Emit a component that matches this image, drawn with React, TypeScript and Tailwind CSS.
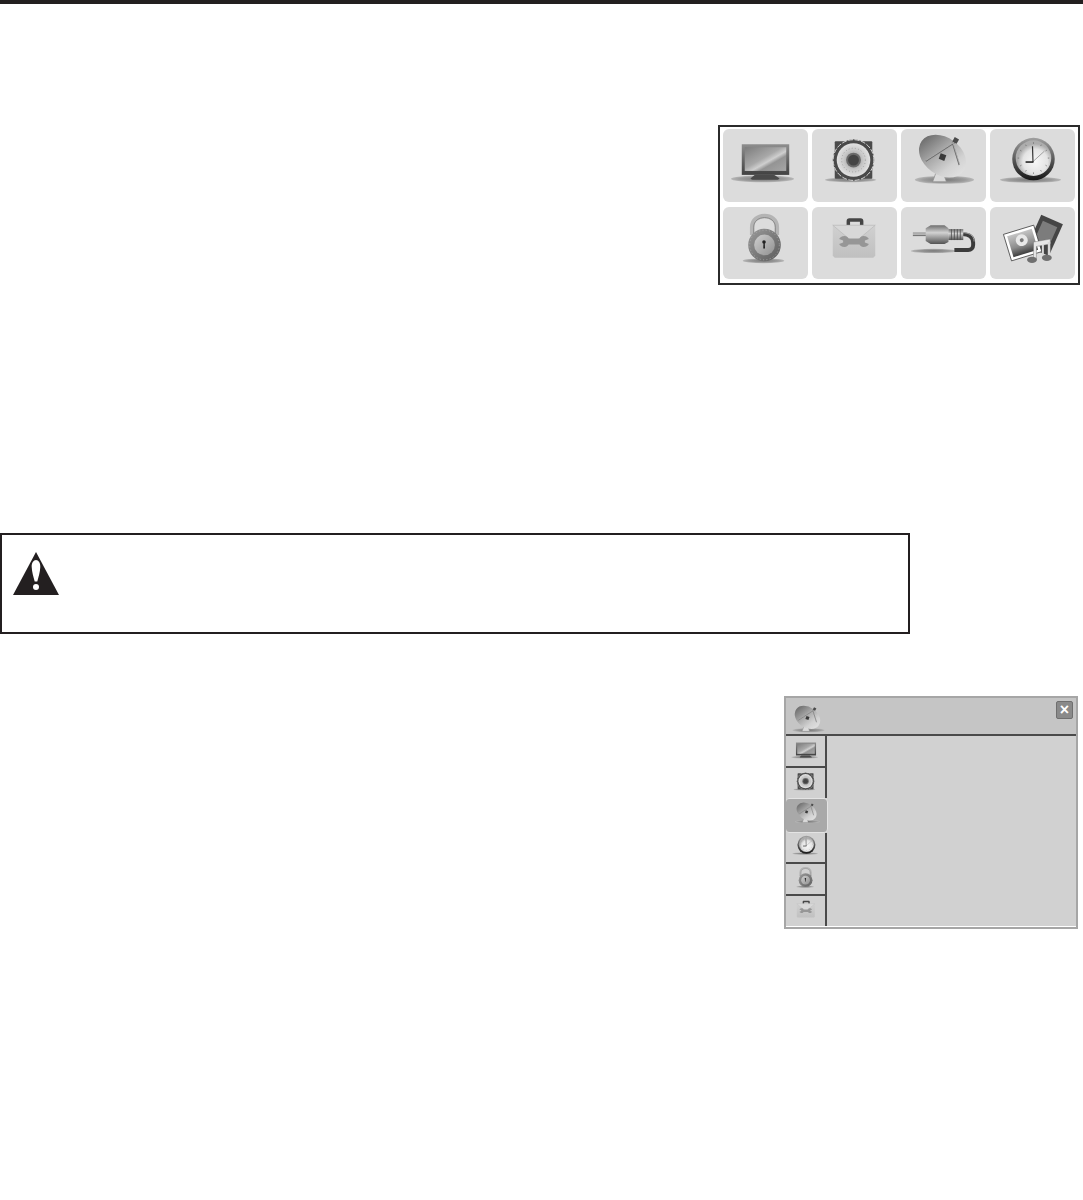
const Shadow = ({ cx, cy, rx, ry = 3.4 }: { cx: number; cy: number; rx: number; ry?: number }) => (
  <ellipse cx={cx} cy={cy} rx={rx} ry={ry} fill="url(#shadow)" />
);

// shared gradients, referenced by id from every icon
function IconDefs() {
  return (
    <svg className="block h-0 w-0" aria-hidden>
      <defs>
        <radialGradient id="shadow">
          <stop offset="0" stopColor="#777" />
          <stop offset="0.7" stopColor="#9c9c9c" />
          <stop offset="1" stopColor="#b8b8b8" />
        </radialGradient>
        <linearGradient id="screen" x1="0" y1="0" x2="1" y2="1">
          <stop offset="0" stopColor="#7c7c7c" />
          <stop offset="0.45" stopColor="#a8a8a8" />
          <stop offset="0.58" stopColor="#cfcfcf" />
          <stop offset="0.68" stopColor="#949494" />
          <stop offset="1" stopColor="#a6a6a6" />
        </linearGradient>
        <linearGradient id="bezel" x1="0" y1="0" x2="0" y2="1">
          <stop offset="0" stopColor="#8e8e8e" />
          <stop offset="1" stopColor="#414141" />
        </linearGradient>
        <radialGradient id="cone">
          <stop offset="0" stopColor="#8c8c8c" />
          <stop offset="0.6" stopColor="#c9c9c9" />
          <stop offset="1" stopColor="#e2e2e2" />
        </radialGradient>
        <linearGradient id="dish" gradientUnits="userSpaceOnUse" x1="16" y1="18" x2="68" y2="32">
          <stop offset="0" stopColor="#6a6a6a" />
          <stop offset="0.4" stopColor="#a6a6a6" />
          <stop offset="0.75" stopColor="#d2d2d2" />
          <stop offset="1" stopColor="#e0e0e0" />
        </linearGradient>
        <linearGradient id="clockRim" x1="0" y1="0" x2="0" y2="1">
          <stop offset="0" stopColor="#a0a0a0" />
          <stop offset="1" stopColor="#161616" />
        </linearGradient>
        <radialGradient id="clockFace" cx="0.55" cy="0.6">
          <stop offset="0" stopColor="#f8f8f8" />
          <stop offset="0.7" stopColor="#e4e4e4" />
          <stop offset="1" stopColor="#adadad" />
        </radialGradient>
        <linearGradient id="lockBody" x1="0" y1="0" x2="1" y2="1">
          <stop offset="0" stopColor="#9a9a9a" />
          <stop offset="1" stopColor="#5c5c5c" />
        </linearGradient>
        <linearGradient id="lockFace" x1="0" y1="0" x2="1" y2="1">
          <stop offset="0" stopColor="#cfcfcf" />
          <stop offset="1" stopColor="#909090" />
        </linearGradient>
        <linearGradient id="toolbox" x1="0" y1="0" x2="0" y2="1">
          <stop offset="0" stopColor="#d0d0d0" />
          <stop offset="1" stopColor="#c0c0c0" />
        </linearGradient>
        <linearGradient id="plug" x1="0" y1="0" x2="0" y2="1">
          <stop offset="0" stopColor="#6e6e6e" />
          <stop offset="0.4" stopColor="#d2d2d2" />
          <stop offset="1" stopColor="#525252" />
        </linearGradient>
        <linearGradient id="photo" x1="0" y1="0" x2="0" y2="1">
          <stop offset="0" stopColor="#c4c4c4" />
          <stop offset="0.6" stopColor="#8c8c8c" />
          <stop offset="1" stopColor="#3e3e3e" />
        </linearGradient>
      </defs>
    </svg>
  );
}

const Tv = () => (
  <>
    <Shadow cx={40} cy={50} rx={32} />
    <path d="M32 46h20l5 3.500c0 1-1 1.500-3 1.500H31c-2 0-3-.5-3-1.500z" fill="#4a4a4a" />
    <rect x="19" y="15" width="48" height="31" fill="url(#bezel)" />
    <rect x="22" y="18" width="42" height="24" fill="url(#screen)" />
  </>
);

const Speaker = () => (
  <>
    <Shadow cx={39} cy={51} rx={26} ry={2.4} />
    <rect x="23" y="12" width="38" height="38" rx="1" fill="#4b4b4b" />
    <circle cx="42" cy="31" r="21" fill="#4a4a4a" />
    <circle cx="42" cy="31" r="20.600" fill="none" stroke="#e4e4e4" strokeDasharray="5 1.500" strokeWidth="0.9" />
    <circle cx="42" cy="31" r="17" fill="url(#cone)" />
    <circle cx="42" cy="31" r="12" fill="none" stroke="#8a8a8a" strokeDasharray="0.8 2.400" strokeWidth="0.8" />
    <circle cx="42" cy="31" r="7.500" fill="#6a6a6a" />
    <circle cx="42" cy="31" r="5.500" fill="#444" />
  </>
);

const Dish = () => (
  <>
    <Shadow cx={44} cy={51} rx={30} ry={4} />
    <path d="M36 42l-4 11h14l-4-11z" fill="#dadada" stroke="#8a8a8a" strokeWidth="0.7" />
    <ellipse cx="42" cy="27" rx="26" ry="19" transform="rotate(36 42 27)" fill="url(#dish)" />
    <path d="M25 32L56 12M52 13l7 23" fill="none" stroke="#6a6a6a" strokeWidth="1.500" />
    <path d="M25 31.500L56 11.500M52.500 13l7 23" fill="none" stroke="#e0e0e0" strokeWidth="0.5" />
    <rect x="53" y="9" width="5" height="5" fill="#4a4a4a" transform="rotate(30 56 11)" />
    <rect x="39" y="25" width="6" height="6" fill="#3a3a3a" transform="rotate(20 42 28)" />
  </>
);

const Clock = () => (
  <>
    <Shadow cx={41} cy={51} rx={31} ry={3} />
    <circle cx="44" cy="30" r="21.500" fill="url(#clockRim)" />
    <circle cx="44" cy="29" r="18" fill="url(#clockFace)" />
    <path d="M44 13v1.500M44 43.500V45M28 29h1.500M58.500 29H60M36 15.500l.8 1.300M52 15.500l-.8 1.300M30.500 21l1.300.8M57.500 21l-1.300.8M30.500 37l1.300-.8M57.500 37l-1.300-.8M36 42.500l.8-1.300M52 42.500l-.8-1.300" stroke="#666" strokeWidth="0.7" />
    <path d="M43.500 33L43 17" stroke="#333" strokeWidth="1.200" />
    <path d="M43 33L55 22" stroke="#808080" strokeWidth="0.7" />
    <path d="M36 33h8" stroke="#222" strokeWidth="1.600" />
  </>
);

const Lock = () => (
  <>
    <Shadow cx={41} cy={54} rx={21} ry={2.400} />
    <path d="M29.500 28V20c0-15 25-15 25 0v8" fill="none" stroke="#b4b4b4" strokeWidth="4.500" />
    <path d="M31 28V20c0-13 22-13 22 0v8" fill="none" stroke="#7a7a7a" strokeWidth="0.7" />
    <circle cx="42" cy="38" r="16.500" fill="url(#lockBody)" />
    <circle cx="42" cy="38" r="15" fill="none" stroke="#b0b0b0" strokeDasharray="1.200 2.200" strokeWidth="0.7" />
    <circle cx="42" cy="38" r="10.500" fill="url(#lockFace)" />
    <circle cx="41.500" cy="35" r="1.800" fill="#222" />
    <path d="M41 35h1.200l.3 6.500h-1.800z" fill="#222" />
  </>
);

const Toolbox = () => (
  <>
    <path d="M35 18v-4c0-2 1-3 3-3h11c2 0 3 1 3 3v4h-3.500v-3.500h-10V18z" fill="#454545" />
    <path d="M21 18h43v31l-2 2H23l-2-2z" fill="url(#toolbox)" />
    <path d="M21 18l21.500 18L64 18z" fill="#d8d8d8" stroke="#b4b4b4" strokeWidth="0.6" />
    <path d="M33 29c-3 0-5 1.500-5.500 3l4 1.500v2l-4 1.500c.5 1.500 2.500 3 5.500 3 2 0 3-1 4-2.500h11c1 1.500 2 2.500 4 2.500 3 0 5-1.500 5.500-3l-4-1.500v-2l4-1.500c-.5-1.500-2.500-3-5.500-3-2 0-3 1-4 2.500H37c-1-1.500-2-2.500-4-2.500z" fill="#969696" />
  </>
);

const Cable = () => (
  <>
    <Shadow cx={33} cy={44} rx={23} ry={2.200} />
    <path d="M62 27c7 0 11 3 11 9v2c0 3-2 5-5 5H54" fill="none" stroke="#3c3c3c" strokeWidth="4" />
    <path d="M62 25.500c7 0 12 3 12 9" fill="none" stroke="#a0a0a0" strokeWidth="1" />
    <rect x="12" y="25.500" width="14" height="3.500" fill="url(#plug)" />
    <path d="M25 21l5-3h14l4 3v14l-4 2H30l-5-3z" fill="url(#plug)" />
    <rect x="48" y="22" width="15" height="11" fill="url(#plug)" />
    <path d="M51 22v11M54 22v11M57 22v11M60 22v11" stroke="#484848" strokeWidth="0.8" />
  </>
);

const Media = () => (
  <>
    <g transform="rotate(24 56 30)">
      <rect x="43" y="11" width="24" height="35" fill="#454545" />
      <rect x="47" y="16" width="16" height="20" fill="#7c7c7c" />
    </g>
    <g transform="rotate(-17 33 36)">
      <rect x="17" y="22" width="32" height="28" fill="#fff" stroke="#333" strokeWidth="0.7" />
      <rect x="20" y="25" width="26" height="22" fill="url(#photo)" />
      <circle cx="33" cy="33" r="6" fill="#e8e8e8" />
      <circle cx="33" cy="33" r="2" fill="#777" />
    </g>
    <path d="M44 35l17-3v5l-14 2.500V52h-3z" fill="#e6e6e6" stroke="#666" strokeWidth="0.4" />
    <path d="M58.500 35H61v16h-2.500zM52.500 38h2v13h-2z" fill="#d8d8d8" />
    <ellipse cx="42.500" cy="53" rx="5" ry="3.200" fill="#707070" />
    <ellipse cx="57.500" cy="51" rx="5" ry="3.200" fill="#707070" />
  </>
);

const TILES = [Tv, Speaker, Dish, Clock, Lock, Toolbox, Cable, Media];

const SIDE_ROWS = [
  { shape: Tv, className: "h-[32px] border-b-2" },
  { shape: Speaker, className: "h-[30px]" },
  { shape: Dish, className: "" },
  { shape: Clock, className: "h-[31px] border-b-2" },
  { shape: Lock, className: "h-[32px] border-b-2" },
  { shape: Toolbox, className: "flex-1" },
];

function Icon({ of: Shape, className }: { of: React.ComponentType; className: string }) {
  return (
    <svg viewBox="0 0 86 73" className={className}>
      <Shape />
    </svg>
  );
}

export default function App() {
  return (
    <div className="h-[1200px] w-[1083px] overflow-hidden bg-white font-['Liberation_Sans',sans-serif]">
      <div className="h-1 bg-[#231f20]" />
      <IconDefs />

      {/* Main menu */}
      <div className="ml-[718px] mt-[121px] h-40 w-[362px] border-2 border-[#2b2b2b] pl-[3px] pt-[2px]">
        <div className="grid grid-cols-[repeat(4,85px)] grid-rows-[73px_72px] gap-x-1 gap-y-[5px]">
          {TILES.map((Shape, i) => (
            <div key={i} className="rounded-md bg-[#dcdcdc]">
              <Icon of={Shape} className="block h-[73px] w-[85px]" />
            </div>
          ))}
        </div>
      </div>

      {/* Warning box */}
      <div className="mt-[248px] h-[101px] w-[910px] border-2 border-[#231f20] pl-[11px] pt-[17px]">
        <svg viewBox="0 0 46 43" className="block h-[43px] w-[46px]">
          <path d="M23 0L46 43H0z" fill="#231f20" />
          <path d="M23 8c2.500 0 4.500 3 4.300 7-.2 5-1.800 10-3 14.500h-2.600C20.500 25 18.900 20 18.700 15c-.2-4 1.800-7 4.300-7z" fill="#fff" />
          <circle cx="23" cy="35" r="3" fill="#fff" />
        </svg>
      </div>

      {/* Settings panel */}
      <div className="ml-[784px] mt-[62px] flex h-[233px] w-[294px] flex-col border-2 border-[#a6a6a6] bg-[#d1d1d1]">
        <div className="flex h-[38px] shrink-0 items-start justify-between border-b-2 border-[#4a4a4a] bg-[#c5c5c5] pr-[3px] pt-[3px]">
          <Icon of={Dish} className="-ml-px mt-[2px] block h-[39px] w-[46px]" />
          <button className="flex h-[18px] w-[17px] items-center justify-center rounded-[2px] border border-[#6f6f6f] bg-[#8a8a8a] text-[16px] font-bold leading-none text-white">
            ×
          </button>
        </div>
        <div className="flex min-h-0 flex-1 flex-col overflow-hidden">
          {SIDE_ROWS.map(({ shape, className }, i) =>
            i === 2 ? (
              <div key={i} className="-ml-px flex h-[35px] w-[43px] shrink-0 items-center justify-center rounded-[4px] border border-[#e4e4e4] bg-[#a9a9a9]">
                <Icon of={shape} className="block h-[31px] w-[36px]" />
              </div>
            ) : (
              <div key={i} className={`flex w-[41px] items-center justify-center overflow-hidden border-r-2 border-[#4a4a4a] ${className}`}>
                <Icon of={shape} className="block h-[31px] w-[36px] shrink-0" />
              </div>
            ),
          )}
        </div>
        <div className="h-px shrink-0 bg-white" />
      </div>
    </div>
  );
}
